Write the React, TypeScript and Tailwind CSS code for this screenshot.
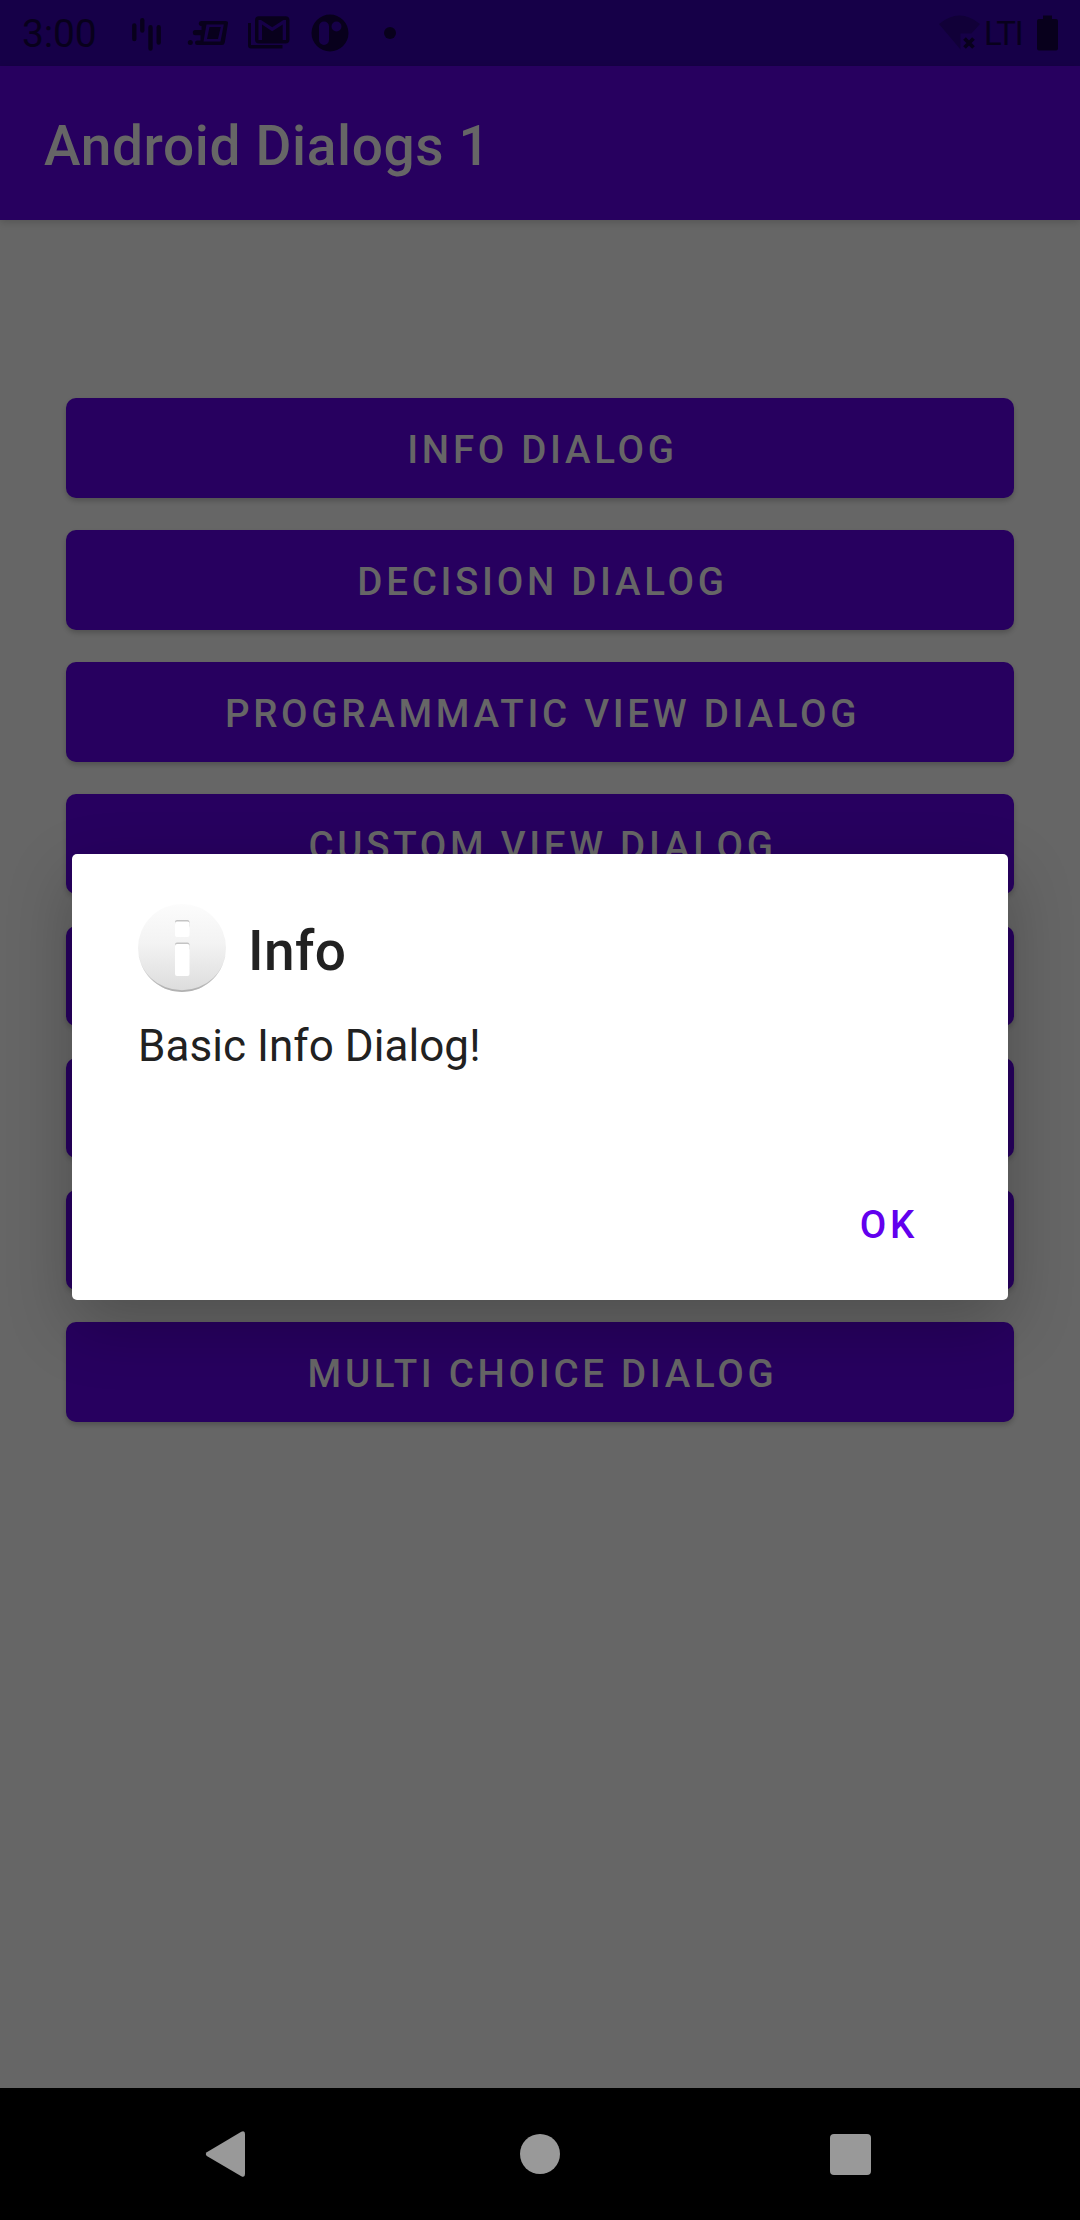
import React from "react";

const actions = [
  "INFO DIALOG",
  "DECISION DIALOG",
  "PROGRAMMATIC VIEW DIALOG",
  "CUSTOM VIEW DIALOG",
  "",
  "",
  "",
  "MULTI CHOICE DIALOG",
];

function BarsIcon() {
  return (
    <svg className="ml-[33px] h-[36px] w-[32px]" viewBox="0 0 32 36" fill="none" stroke="currentColor" strokeWidth="4.4" strokeLinecap="round">
      <path d="M4.3 10.500V24M12.3 5.200V15.500M20.5 12.300V33.500M28.7 12.300V27.500" />
    </svg>
  );
}

function FastIcon() {
  return (
    <svg className="ml-[24px] h-[36px] w-[44px]" viewBox="0 0 44 36" fill="currentColor">
      <circle cx="4.3" cy="27.5" r="2.5" />
      <path
        fillRule="evenodd"
        d="M15.5 6H39.500Q42.300 6 42 8.300L38.800 27.500Q38.300 30 36 30H11.200Q9 30 9 27.700Q9 25.500 11.200 25.500H14.500V20.200H9.200Q6.800 20.200 6.800 17.700Q6.800 15 9.200 15H15.500V11H14.500Q12.500 10.500 12.700 8.300Q13 6 15.500 6ZM20.500 9.500L17.500 26.500H34.500L37.800 9.500Z"
      />
      <path d="M23.500 12H34.800L32 24H21Z" />
    </svg>
  );
}

function MailIcon() {
  return (
    <svg className="ml-[17px] h-[36px] w-[43px]" viewBox="0 1 43 36" fill="currentColor">
      <path d="M1 9H4V31H35.500V34.500H4Q1 34.500 1 31.500Z" />
      <path fillRule="evenodd" d="M12 2.200H38.500Q42.500 2.200 42.500 6.200V25.500Q42.500 29.500 38.500 29.500H12Q8 29.500 8 25.500V6.200Q8 2.200 12 2.200ZM11.500 6V26H15V10.500L25.200 17.200L35.700 10.500V26H39V6H36.500L25.200 13.200L14 6Z" />
    </svg>
  );
}

function RoundIcon() {
  return (
    <svg className="ml-[21px] h-[38px] w-[38px]" viewBox="0 0 38 38" fill="currentColor">
      <path fillRule="evenodd" d="M19 0.500A18.500 18.500 0 1 1 19 37.500A18.500 18.500 0 1 1 19 0.500ZM13 7.500A5 5 0 0 0 8 12.500V26A5 5 0 0 0 18 26V12.500A5 5 0 0 0 13 7.500ZM25.500 7.500A5 5 0 1 0 25.500 17.500A5 5 0 1 0 25.500 7.500Z" />
    </svg>
  );
}

function StatusBar() {
  return (
    <div className="flex h-[66px] items-center bg-[#160048] text-[#08001c]">
      <span className="ml-[22px] w-[75px] whitespace-nowrap pt-[2px] text-[39px] leading-[40px] tracking-[-0.2px]">3:00</span>
      <BarsIcon />
      <FastIcon />
      <MailIcon />
      <RoundIcon />
      <span className="ml-[35px] size-3 rounded-full bg-current" />
      <div className="ml-auto flex items-center">
        <svg className="h-[38px] w-[42px]" viewBox="0 0 42 38">
          <path d="M0 10Q20.500 -7 41 10L32.500 19.500H21.500V35.500Z" fill="#110038" />
          <path d="M25.500 24.500L34.500 33.500M34.500 24.500L25.500 33.500" stroke="currentColor" strokeWidth="3.800" />
        </svg>
        <span className="ml-[3px] w-[42px] whitespace-nowrap pt-[2px] text-[33px] leading-[34px] tracking-[-1.2px]">LTI</span>
        <svg className="ml-[11px] mr-[22px] h-[36px] w-[21px]" viewBox="0 0 21 36" fill="currentColor">
          <path d="M6 0.500H15V4H19Q21 4 21 6V33.500Q21 35.500 19 35.500H2Q0 35.500 0 33.500V6Q0 4 2 4H6Z" />
        </svg>
      </div>
    </div>
  );
}

function InfoIcon() {
  return (
    <svg className="size-[88px]" viewBox="0 0 88 88">
      <defs>
        <linearGradient id="disc" x1="0" y1="0" x2="0" y2="1">
          <stop offset="0" stopColor="#fcfcfc" />
          <stop offset="0.450" stopColor="#f3f3f3" />
          <stop offset="1" stopColor="#dcdcdc" />
        </linearGradient>
        <linearGradient id="rim" x1="0" y1="0" x2="0" y2="1">
          <stop offset="0" stopColor="#b0b0b0" stopOpacity="0" />
          <stop offset="1" stopColor="#b0b0b0" />
        </linearGradient>
      </defs>
      <circle cx="44" cy="44" r="44" fill="url(#disc)" />
      <path d="M0 44A44 44 0 0 0 88 44A44 42.300 0 0 1 0 44Z" fill="url(#rim)" />
      <rect x="37" y="16" width="14.500" height="8" rx="2" fill="#c4c4c4" />
      <rect x="37" y="17.500" width="14.500" height="15.500" rx="2" fill="#fff" />
      <rect x="37" y="38.500" width="14.500" height="8" rx="2" fill="#c4c4c4" />
      <rect x="37" y="40" width="14.500" height="32" rx="2" fill="#fff" />
    </svg>
  );
}

function InfoDialog() {
  return (
    <div role="dialog" className="absolute left-[72px] top-[854px] flex h-[446px] w-[936px] flex-col rounded-[5px] bg-white px-[66px] pt-[50px] text-[#212121] shadow-[0_24px_66px_rgba(0,0,0,0.24)]">
      <div className="flex items-center gap-[22px]">
        <InfoIcon />
        <h2 className="pt-[6px] text-[55px] font-medium leading-[64px] tracking-[0.4px]">Info</h2>
      </div>
      <p className="mt-[26px] text-[44px] leading-[56px] tracking-[0.05px]">Basic Info Dialog!</p>
      <button className="ml-auto mr-[24px] mt-[126px] text-[38.5px] font-medium leading-[50px] tracking-[3.7px] text-[#6200ee]">OK</button>
    </div>
  );
}

function NavigationBar() {
  return (
    <div className="flex h-[132px] items-center bg-black text-[#999999]">
      <svg className="ml-[205px] h-[48px] w-[41px]" viewBox="0 0 41 48" fill="currentColor">
        <path d="M1.800 22.200L36.300 1.800Q40 0.300 40 4V44Q40 48 36.300 46.300L1.800 26Q-0.200 24 1.800 22.200Z" />
      </svg>
      <span className="ml-[274px] size-[40px] rounded-full bg-current" />
      <span className="ml-[270px] size-[41px] rounded-[4px] bg-current" />
    </div>
  );
}

export default function App() {
  return (
    <div className="relative flex h-[2220px] w-[1080px] flex-col overflow-hidden bg-[#666666] font-[Roboto,sans-serif]">
      <StatusBar />
      <header className="flex h-[154px] items-center bg-[#27005f] px-[44px] pt-[6px] shadow-[0_2px_8px_rgba(0,0,0,0.18)]">
        <h1 className="text-[55px] font-medium leading-[64px] tracking-[0.65px] text-[#666666]">Android Dialogs 1</h1>
      </header>
      <main className="flex flex-1 flex-col gap-[32px] px-[66px] pt-[178px]">
        {actions.map((label, i) => (
          <button
            key={i}
            className="h-[100px] rounded-[10px] bg-[#27005f] pl-[5px] pt-[4px] text-[38.5px] font-medium leading-[50px] tracking-[3.7px] text-[#666666] shadow-[0_3px_5px_rgba(0,0,0,0.2)]"
          >
            {label}
          </button>
        ))}
      </main>
      <NavigationBar />
      <InfoDialog />
    </div>
  );
}
